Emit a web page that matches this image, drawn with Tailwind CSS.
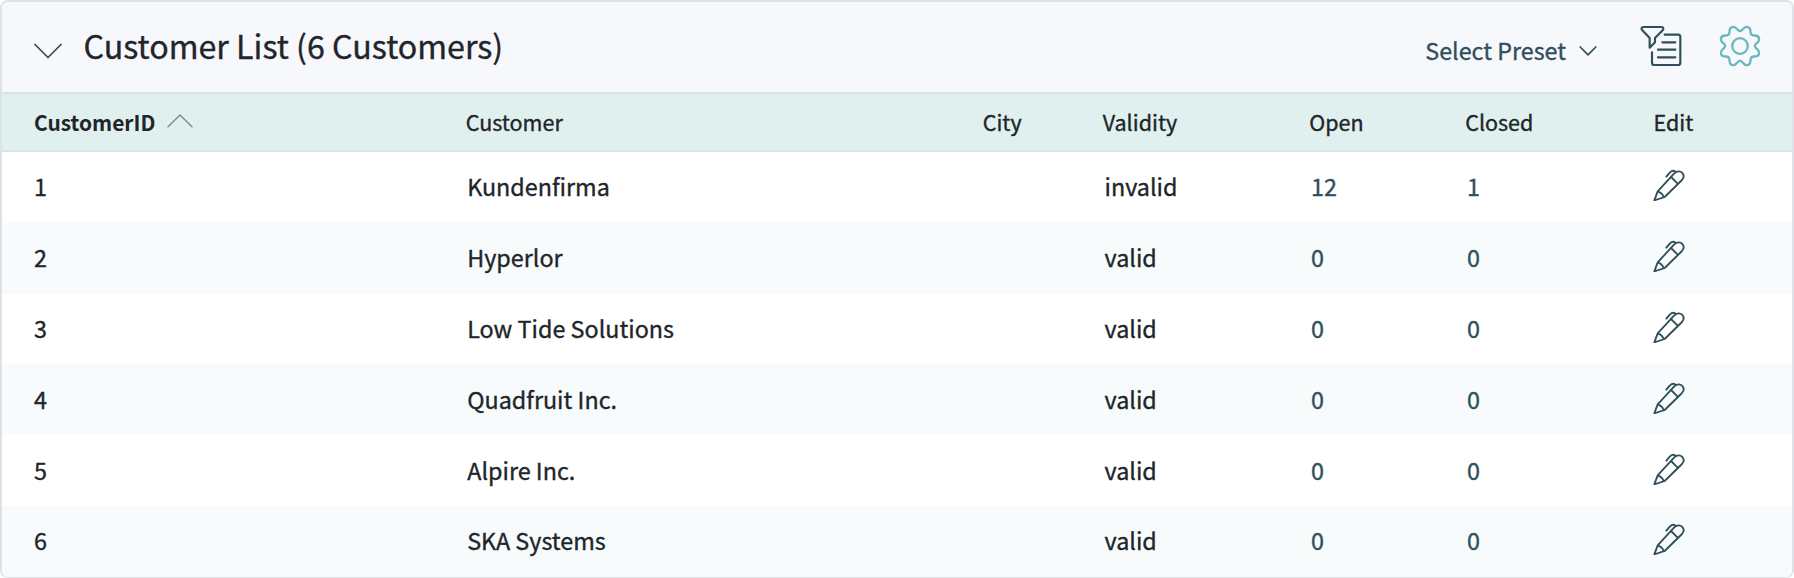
<!DOCTYPE html>
<html lang="en">
<head>
<meta charset="utf-8">
<title>Customer List</title>
<script src="https://cdn.jsdelivr.net/npm/@tailwindcss/browser@4"></script>
</head>
<body class="bg-white font-['Noto_Sans_CJK_SC','Noto_Sans',sans-serif] text-[#212529] [-webkit-text-stroke:0.35px_currentColor]">
<svg class="hidden">
  <symbol id="pencil" viewBox="42 27 96 96">
    <g fill="none" stroke="#2f4f5b" stroke-width="5.5" stroke-linecap="round" stroke-linejoin="round">
      <path d="M46 121 L56 94 L105 41 C113 32 124 33 129 38 C135 44 135 53 129 60 L77 111 Z"/>
      <path d="M57 95 C65 97 71 103 74 111"/>
      <path d="M96 51 L116 71"/>
      <path d="M82 50 L93 37 C99 31 106 31 111 36"/>
    </g>
  </symbol>
</svg>
<main class="flex h-[578px] w-[1794px] flex-col overflow-hidden rounded-lg border-2 border-b border-[#dee2e6] bg-white">
  <header class="flex h-[92px] shrink-0 items-center border-b-2 border-[#dee2e6] bg-[#f7f8fc] pl-8 pr-[31px]">
    <svg class="mt-[7px] h-4 w-7 shrink-0" viewBox="0 0 28 16" fill="none" stroke="#2f4f5b" stroke-width="1.7" stroke-linecap="round" stroke-linejoin="round"><path d="M1 1.5 L14 14.5 L27 1.5"/></svg>
    <h1 class="ml-[21.5px] whitespace-nowrap pb-[5px] text-[32.2px] leading-[48px]">Customer List (6 Customers)</h1>
    <div class="ml-auto flex items-center text-[#2f4f5b]">
      <span class="whitespace-nowrap pt-[6px] text-[23.3px] leading-8">Select Preset</span>
      <svg class="ml-[13px] mt-[8px] h-[10px] w-[18px]" viewBox="0 0 18 10" fill="none" stroke="#2f4f5b" stroke-width="1.7" stroke-linecap="round" stroke-linejoin="round"><path d="M1.2 1 L9 8.8 L16.8 1"/></svg>
      <svg class="mb-px ml-[41px] size-12" viewBox="24 24 144 144" fill="none" stroke="#2f4f5b" stroke-width="6.5" stroke-linecap="round" stroke-linejoin="round">
        <path d="M40 36 H95 C101 36 101 42 98 46 L75 69 V82 L59 98 V69 L37 46 C33 42 34 36 40 36 Z"/>
        <path d="M104 59 H144 Q151 59 151 66 V143 Q151 150 144 150 H73 Q66 150 66 143 V112"/>
        <path d="M97 82 H136 M84 104 H136 M84 127 H136"/>
      </svg>
      <svg class="mb-[2px] ml-[33px] size-[42px]" viewBox="-62 -62 124 124" fill="none" stroke="#69b8c0" stroke-width="6.8" stroke-linecap="round">
        <circle r="23"/>
        <path d="M0 -44 C8 -44 9 -56.5 20 -56.5 C29 -56.5 31 -50 31 -42 C31 -34 34 -31 42 -31 C50 -31 56.5 -29 56.5 -20 C56.5 -9 44 -8 44 0"/>
        <path transform="rotate(90)" d="M0 -44 C8 -44 9 -56.5 20 -56.5 C29 -56.5 31 -50 31 -42 C31 -34 34 -31 42 -31 C50 -31 56.5 -29 56.5 -20 C56.5 -9 44 -8 44 0"/>
        <path transform="rotate(180)" d="M0 -44 C8 -44 9 -56.5 20 -56.5 C29 -56.5 31 -50 31 -42 C31 -34 34 -31 42 -31 C50 -31 56.5 -29 56.5 -20 C56.5 -9 44 -8 44 0"/>
        <path transform="rotate(270)" d="M0 -44 C8 -44 9 -56.5 20 -56.5 C29 -56.5 31 -50 31 -42 C31 -34 34 -31 42 -31 C50 -31 56.5 -29 56.5 -20 C56.5 -9 44 -8 44 0"/>
      </svg>
    </div>
  </header>
  <div class="grid h-[58px] shrink-0 grid-cols-[431.7px_517px_120px_206.5px_156px_188.3px_1fr] items-center border-b-2 border-[#dee2e6] bg-[#e0f0ef] pb-px pl-8 text-[21.5px] leading-8">
    <div class="flex items-center text-[20.9px] font-bold [-webkit-text-stroke:0]">CustomerID
      <svg class="mb-px ml-[12px] h-[14px] w-[26px]" viewBox="0 0 26 14" fill="none" stroke="#858b8c" stroke-width="1.5" stroke-linecap="round" stroke-linejoin="round"><path d="M1 12.8 L13 1 L25 12.8"/></svg>
    </div>
    <div>Customer</div><div>City</div><div>Validity</div><div>Open</div><div>Closed</div><div>Edit</div>
  </div>
  <div id="rows" class="text-[23.35px] leading-8"></div>
</main>
<script>
  const customers = [
    ['1', 'Kundenfirma', 'invalid', '12', '1'],
    ['2', 'Hyperlor', 'valid', '0', '0'],
    ['3', 'Low Tide Solutions', 'valid', '0', '0'],
    ['4', 'Quadfruit Inc.', 'valid', '0', '0'],
    ['5', 'Alpire Inc.', 'valid', '0', '0'],
    ['6', 'SKA Systems', 'valid', '0', '0'],
  ];
  document.getElementById('rows').innerHTML = customers.map(([id, name, validity, open, closed]) => `
    <div class="grid h-[70.8px] grid-cols-[433.2px_517.3px_120px_206.5px_156px_186.5px_1fr] items-center pb-[2px] pl-8 even:bg-[#f7fbfc]">
      <div>${id}</div><div>${name}</div><div></div><div>${validity}</div>
      <div class="text-[#2f4f5b]">${open}</div><div class="text-[#2f4f5b]">${closed}</div>
      <svg class="mb-[2px] size-8"><use href="#pencil"/></svg>
    </div>`).join('');
</script>
</body>
</html>
